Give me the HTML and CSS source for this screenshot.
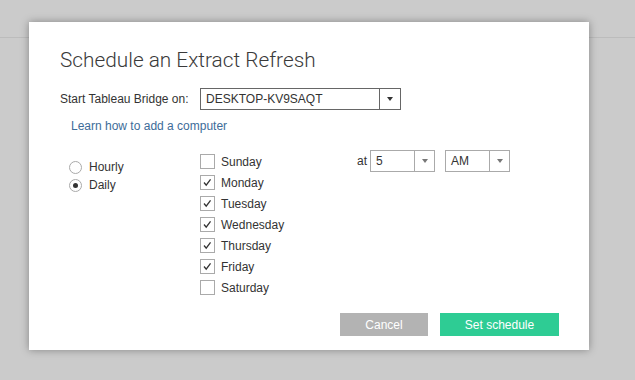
FILE: index.html
```html
<!DOCTYPE html>
<html lang="en">
<head>
    <meta charset="UTF-8">
    <title>Schedule an Extract Refresh</title>
    <link rel="stylesheet" href="styles.css">
</head>
<body>
    <div class="topbar"></div>
    <div class="dialog">
        <h1 class="dialog-title">Schedule an Extract Refresh</h1>
        <div class="bridge-row">
            <span class="bridge-label">Start Tableau Bridge on:</span>
            <div class="select select-dark select-bridge">
                <span class="select-value">DESKTOP-KV9SAQT</span>
                <span class="select-arrow"><i class="caret"></i></span>
            </div>
        </div>
        <a class="learn-link" href="#">Learn how to add a computer</a>
        <div class="schedule">
            <div class="freq">
                <label class="radio-row"><span class="radio"></span>Hourly</label>
                <label class="radio-row"><span class="radio radio-on"></span>Daily</label>
            </div>
            <div class="days">
                <label class="day"><span class="check"></span>Sunday</label>
                <label class="day"><span class="check check-on"><svg viewBox="0 0 15 15"><polyline points="3.5,7.5 6,10.5 11,4" /></svg></span>Monday</label>
                <label class="day"><span class="check check-on"><svg viewBox="0 0 15 15"><polyline points="3.5,7.5 6,10.5 11,4" /></svg></span>Tuesday</label>
                <label class="day"><span class="check check-on"><svg viewBox="0 0 15 15"><polyline points="3.5,7.5 6,10.5 11,4" /></svg></span>Wednesday</label>
                <label class="day"><span class="check check-on"><svg viewBox="0 0 15 15"><polyline points="3.5,7.5 6,10.5 11,4" /></svg></span>Thursday</label>
                <label class="day"><span class="check check-on"><svg viewBox="0 0 15 15"><polyline points="3.5,7.5 6,10.5 11,4" /></svg></span>Friday</label>
                <label class="day"><span class="check"></span>Saturday</label>
            </div>
            <div class="time">
                <span class="at">at</span>
                <div class="select select-hour">
                    <span class="select-value">5</span>
                    <span class="select-arrow"><i class="caret caret-light"></i></span>
                </div>
                <div class="select select-ampm">
                    <span class="select-value">AM</span>
                    <span class="select-arrow"><i class="caret caret-light"></i></span>
                </div>
            </div>
        </div>
        <div class="actions">
            <button class="btn btn-cancel">Cancel</button>
            <button class="btn btn-primary">Set schedule</button>
        </div>
    </div>
</body>
</html>
```

FILE: styles.css
```css
html,
button {
    font-family: 'Liberation Sans', Arial, sans-serif;
    font-size: 12px;
    color: #333;
}

body {
    margin: 0;
    background: #cbcbcb;
    height: 380px;
    overflow: hidden;
}

.topbar {
    height: 37px;
    border-bottom: 1px solid #bcbcbc;
}

.dialog {
    position: absolute;
    left: 29px;
    top: 22px;
    width: 560px;
    height: 328px;
    box-sizing: border-box;
    padding: 26px 30px 0 31px;
    background: white;
    box-shadow: 0 0 8px rgba(0, 0, 0, 0.35);
    display: flex;
    flex-direction: column;
}

.dialog-title {
    margin: 0;
    font-family: Roboto, 'Liberation Sans', sans-serif;
    font-weight: 300;
    font-size: 20.8px;
    line-height: 24px;
    color: #3a3a3a;
}

.bridge-row {
    margin-top: 16px;
    display: flex;
    align-items: center;
}

.bridge-label {
    width: 140px;
}

.select {
    display: flex;
    box-sizing: border-box;
    height: 22px;
    border: 1px solid #aaa;
    background: white;
}

.select-dark {
    border-color: #666;
}

.select-value {
    flex: 1;
    padding-left: 5px;
    line-height: 20px;
}

.select-arrow {
    width: 19px;
    border-left: 1px solid #aaa;
    display: flex;
    align-items: center;
    justify-content: center;
}

.select-dark .select-arrow {
    border-left-color: #666;
    width: 20px;
}

.caret {
    width: 0;
    height: 0;
    border-left: 3px solid transparent;
    border-right: 3px solid transparent;
    border-top: 4px solid #333;
}

.caret-light {
    border-top-color: #777;
}

.select-bridge {
    width: 201px;
}

.learn-link {
    margin: 8px 0 0 11px;
    line-height: 16px;
    color: #3d6c99;
    text-decoration: none;
    align-self: flex-start;
}

.schedule {
    margin-top: 16px;
    display: flex;
}

.freq {
    width: 140px;
    padding: 8px 0 0 9px;
    box-sizing: border-box;
}

.radio-row {
    display: flex;
    align-items: center;
    height: 18px;
    gap: 7px;
}

.radio {
    width: 13px;
    height: 13px;
    box-sizing: border-box;
    border: 1px solid #aaa;
    border-radius: 50%;
    display: flex;
    align-items: center;
    justify-content: center;
}

.radio-on::after {
    content: '';
    width: 5px;
    height: 5px;
    border-radius: 50%;
    background: #333;
}

.days {
    width: 157px;
    padding-top: 1px;
}

.day {
    display: flex;
    align-items: center;
    height: 21px;
    gap: 6px;
}

.check {
    width: 15px;
    height: 15px;
    box-sizing: border-box;
    border: 1px solid #aaa;
    display: flex;
}

.check svg {
    width: 13px;
    height: 13px;
    fill: none;
    stroke: #333;
    stroke-width: 1.5;
}

.time {
    display: flex;
    align-items: center;
    align-self: flex-start;
}

.at {
    margin-right: 3px;
}

.select-hour {
    width: 65px;
    margin-right: 10px;
}

.select-ampm {
    width: 65px;
}

.actions {
    margin-top: auto;
    margin-bottom: 14px;
    display: flex;
    justify-content: flex-end;
    gap: 12px;
}

.btn {
    border: 0;
    height: 23px;
    padding: 0;
    color: white;
    font-size: 12px;
}

.btn-cancel {
    width: 88px;
    background: #b3b3b3;
}

.btn-primary {
    width: 119px;
    background: #2ecc94;
}
```
